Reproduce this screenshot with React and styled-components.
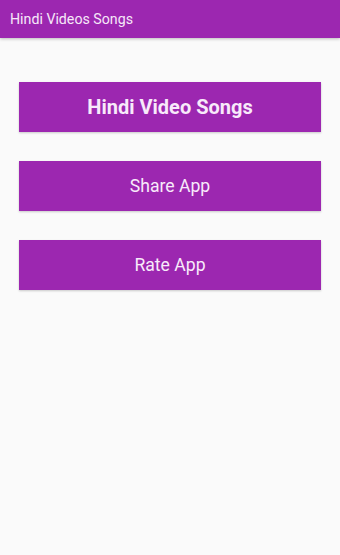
import React from "react";
import styled, { createGlobalStyle } from "styled-components";

const Global = createGlobalStyle`
  html, body { margin: 0; padding: 0; background: #fafafa; }
  body { font-family: Roboto, "Noto Sans", sans-serif; }
`;

const Screen = styled.div`
  width: 340px;
  height: 555px;
  background: #fafafa;
  display: flex;
  flex-direction: column;
`;

const AppBar = styled.header`
  height: 38px;
  background: #9c27b0;
  display: flex;
  align-items: center;
  padding-left: 10px;
  color: #f6e8f8;
  font-size: 14.2px;
  box-shadow: 0 1px 3px rgba(0, 0, 0, 0.25);
`;

const Content = styled.main`
  display: flex;
  flex-direction: column;
  gap: 29px;
  padding: 44px 19px 0 19px;
`;

const Button = styled.button`
  height: 50px;
  width: 302px;
  border: none;
  background: #9c27b0;
  color: #f8eafa;
  font-family: Roboto, "Noto Sans", sans-serif;
  font-size: ${(p) => (p.$primary ? "20px" : "17.6px")};
  font-weight: ${(p) => (p.$primary ? 700 : 400)};
  box-shadow: 0 1px 2px rgba(0, 0, 0, 0.2);
  padding: 0;
  cursor: pointer;
`;

export default function App() {
  return (
    <>
      <Global />
      <Screen>
        <AppBar>Hindi Videos Songs</AppBar>
        <Content>
          <Button $primary>Hindi Video Songs</Button>
          <Button>Share App</Button>
          <Button>Rate App</Button>
        </Content>
      </Screen>
    </>
  );
}
